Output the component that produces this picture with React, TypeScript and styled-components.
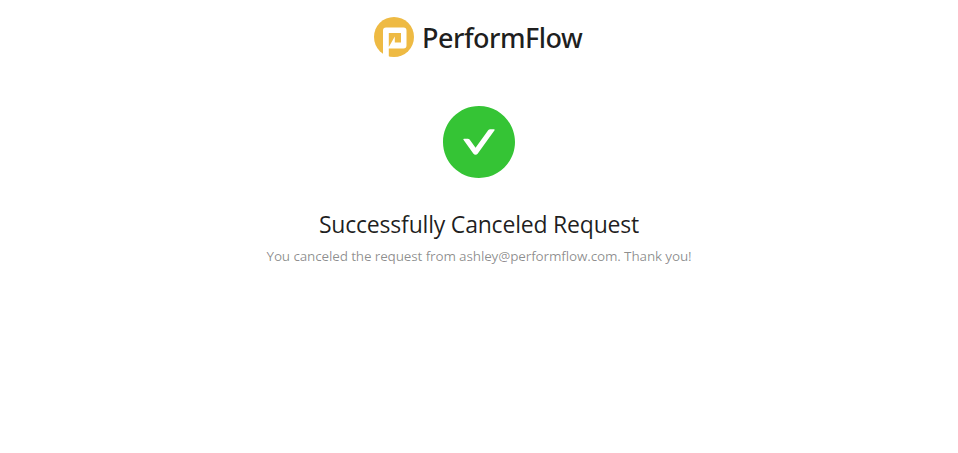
import React from "react";
import styled, { createGlobalStyle } from "styled-components";

const GlobalStyle = createGlobalStyle`
  body {
    margin: 0;
    background: #fff;
    font-family: "Segoe UI", "Open Sans", "Noto Sans", sans-serif;
  }
`;

const Page = styled.main`
  display: flex;
  flex-direction: column;
  align-items: center;
  padding-top: 17px;
`;

const Brand = styled.header`
  display: flex;
  align-items: center;
  gap: 8px;
  height: 40px;
  color: rgba(0, 0, 0, 0.88);
`;

const BrandLogo = styled.svg`
  display: block;
  width: 40px;
  height: 40px;
`;

const BrandName = styled.span`
  width: 162px;
  padding-top: 2px;
  font-family: "Segoe UI", "Noto Sans", sans-serif;
  font-size: 27px;
  font-weight: 500;
  line-height: 40px;
  letter-spacing: -0.5px;
  white-space: nowrap;
`;

const Result = styled.section`
  display: flex;
  flex-direction: column;
  align-items: center;
  padding-top: 49px;
`;

const ResultIcon = styled.svg`
  display: block;
  width: 72px;
  height: 72px;
  margin-bottom: 30px;
`;

const Title = styled.h1`
  margin: 0;
  color: rgba(0, 0, 0, 0.88);
  font-size: 23px;
  font-weight: 400;
  line-height: 32px;
  letter-spacing: -0.2px;
  white-space: nowrap;
`;

const Subtitle = styled.p`
  margin: 5px 0 0;
  color: rgba(0, 0, 0, 0.45);
  font-size: 13.5px;
  font-weight: 400;
  line-height: 22px;
  letter-spacing: -0.14px;
  white-space: nowrap;
`;

export default function App() {
  return (
    <Page>
      <GlobalStyle />
      <Brand>
        <BrandLogo viewBox="0 0 40 40" aria-hidden="true">
          <circle cx="20" cy="20" r="20" fill="#eeba43" />
          <path
            fill="#fff"
            fillRule="evenodd"
            d="M9 13.5Q9 10.5 12 10.5H29.5Q32.5 10.5 32.5 13.5V28.5Q32.5 31.5 29.5 31.5H14.8V40H9ZM14.8 16V30L20.8 19.5V25.5H27V16Z"
          />
        </BrandLogo>
        <BrandName>PerformFlow</BrandName>
      </Brand>
      <Result>
        <ResultIcon viewBox="64 64 896 896" aria-hidden="true">
          <path
            fill="#35c435"
            d="M512 64C264.6 64 64 264.6 64 512s200.6 448 448 448 448-200.6 448-448S759.4 64 512 64zm193.5 301.7l-210.6 292a31.8 31.8 0 01-51.7 0L318.5 484.9c-3.8-5.3 0-12.7 6.5-12.7h46.9c10.2 0 19.9 4.9 25.9 13.3l71.2 98.8 157.2-218c6-8.3 15.6-13.3 25.9-13.3H699c6.5 0 10.3 7.4 6.5 12.7z"
          />
        </ResultIcon>
        <Title>Successfully Canceled Request</Title>
        <Subtitle>You canceled the request from ashley@performflow.com. Thank you!</Subtitle>
      </Result>
    </Page>
  );
}
